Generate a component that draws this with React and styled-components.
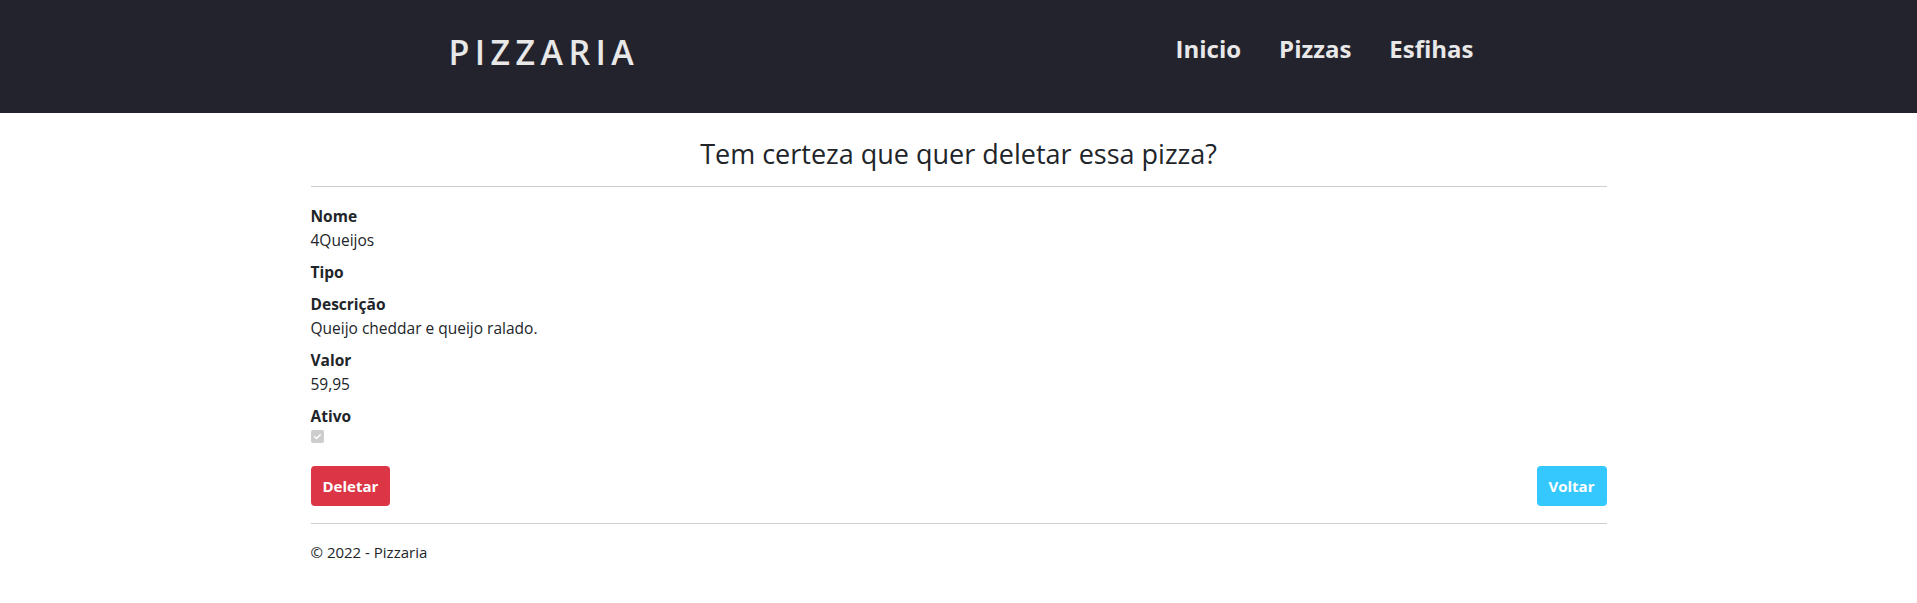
import React from "react";
import styled, { createGlobalStyle } from "styled-components";

const GlobalStyle = createGlobalStyle`
  body {
    margin: 0;
    font-family: "Open Sans", "Noto Sans", sans-serif;
    font-size: 15.5px;
    line-height: 24px;
    color: #212529;
    background: #fff;
  }
`;

const pizza = {
  nome: "4Queijos",
  tipo: "",
  descricao: "Queijo cheddar e queijo ralado.",
  valor: "59,95",
  ativo: true,
};

function App() {
  return (
    <>
      <GlobalStyle />
      <Header>
        <HeaderInner>
          <Brand>PIZZARIA</Brand>
          <Nav>
            <NavItem href="#">Inicio</NavItem>
            <NavItem href="#">Pizzas</NavItem>
            <NavItem href="#">Esfihas</NavItem>
          </Nav>
        </HeaderInner>
      </Header>

      <Container>
        <Title>Tem certeza que quer deletar essa pizza?</Title>
        <Rule />
        <Details>
          <Term>Nome</Term>
          <Desc>{pizza.nome}</Desc>
          <Term>Tipo</Term>
          <Desc>{pizza.tipo}</Desc>
          <Term>Descrição</Term>
          <Desc>{pizza.descricao}</Desc>
          <Term>Valor</Term>
          <Desc>{pizza.valor}</Desc>
          <Term>Ativo</Term>
          <Desc>
            <Check checked={pizza.ativo}>
              <svg width="9" height="9" viewBox="0 0 16 16">
                <path
                  d="M3 8.5l3.2 3.2L13 4.8"
                  fill="none"
                  stroke="#fff"
                  strokeWidth="2.6"
                  strokeLinecap="round"
                  strokeLinejoin="round"
                />
              </svg>
            </Check>
          </Desc>
        </Details>
        <Actions>
          <Button variant="danger">Deletar</Button>
          <Button variant="info">Voltar</Button>
        </Actions>
        <Rule />
        <Footer>© 2022 - Pizzaria</Footer>
      </Container>
    </>
  );
}

// STYLES
const Header = styled.header`
  background-color: #23232d;
  height: 113px;
  display: flex;
  align-items: flex-start;
`;

const HeaderInner = styled.div`
  width: 1030px;
  margin: 0 auto;
  display: flex;
  justify-content: space-between;
  align-items: flex-start;
`;

const Brand = styled.div`
  color: #e8e8e8;
  font-size: 34px;
  font-weight: 600;
  letter-spacing: 5.4px;
  line-height: 1;
  padding-top: 35px;
  padding-left: 5px;
`;

const Nav = styled.nav`
  display: flex;
  gap: 38px;
  padding-top: 35px;
`;

const NavItem = styled.a`
  color: #e8e8e8;
  font-size: 24px;
  font-weight: 700;
  line-height: 1.2;
  text-decoration: none;
`;

const Container = styled.main`
  width: 1296px;
  margin: 0 auto;
`;

const Title = styled.h3`
  margin: 0;
  padding-top: 25px;
  padding-bottom: 16px;
  text-align: center;
  font-size: 27px;
  font-weight: 500;
  line-height: 1.2;
`;

const Rule = styled.hr`
  margin: 0;
  border: 0;
  border-top: 1px solid #cfcfcf;
`;

const Details = styled.dl`
  margin: 17px 0 0;
`;

const Term = styled.dt`
  font-weight: 700;
`;

const Desc = styled.dd`
  margin: 0 0 8px;
`;

const Check = styled.span`
  width: 13px;
  height: 13px;
  margin-top: 2px;
  border-radius: 2px;
  background: ${(p) => (p.checked ? "#cdcdcd" : "#fff")};
  display: inline-flex;
  align-items: center;
  justify-content: center;
  vertical-align: top;
`;

const Actions = styled.div`
  display: flex;
  justify-content: space-between;
  margin-top: 14px;
  margin-bottom: 17px;
`;

const Button = styled.button`
  height: 40px;
  padding: 0 12px;
  border: 0;
  border-radius: 4px;
  font-family: inherit;
  font-size: 15px;
  font-weight: 700;
  color: #fff;
  background-color: ${(p) => (p.variant === "danger" ? "#dc3545" : "#35c8fe")};
  cursor: pointer;
`;

const Footer = styled.footer`
  padding-top: 16px;
  font-size: 15px;
`;

export default App;
